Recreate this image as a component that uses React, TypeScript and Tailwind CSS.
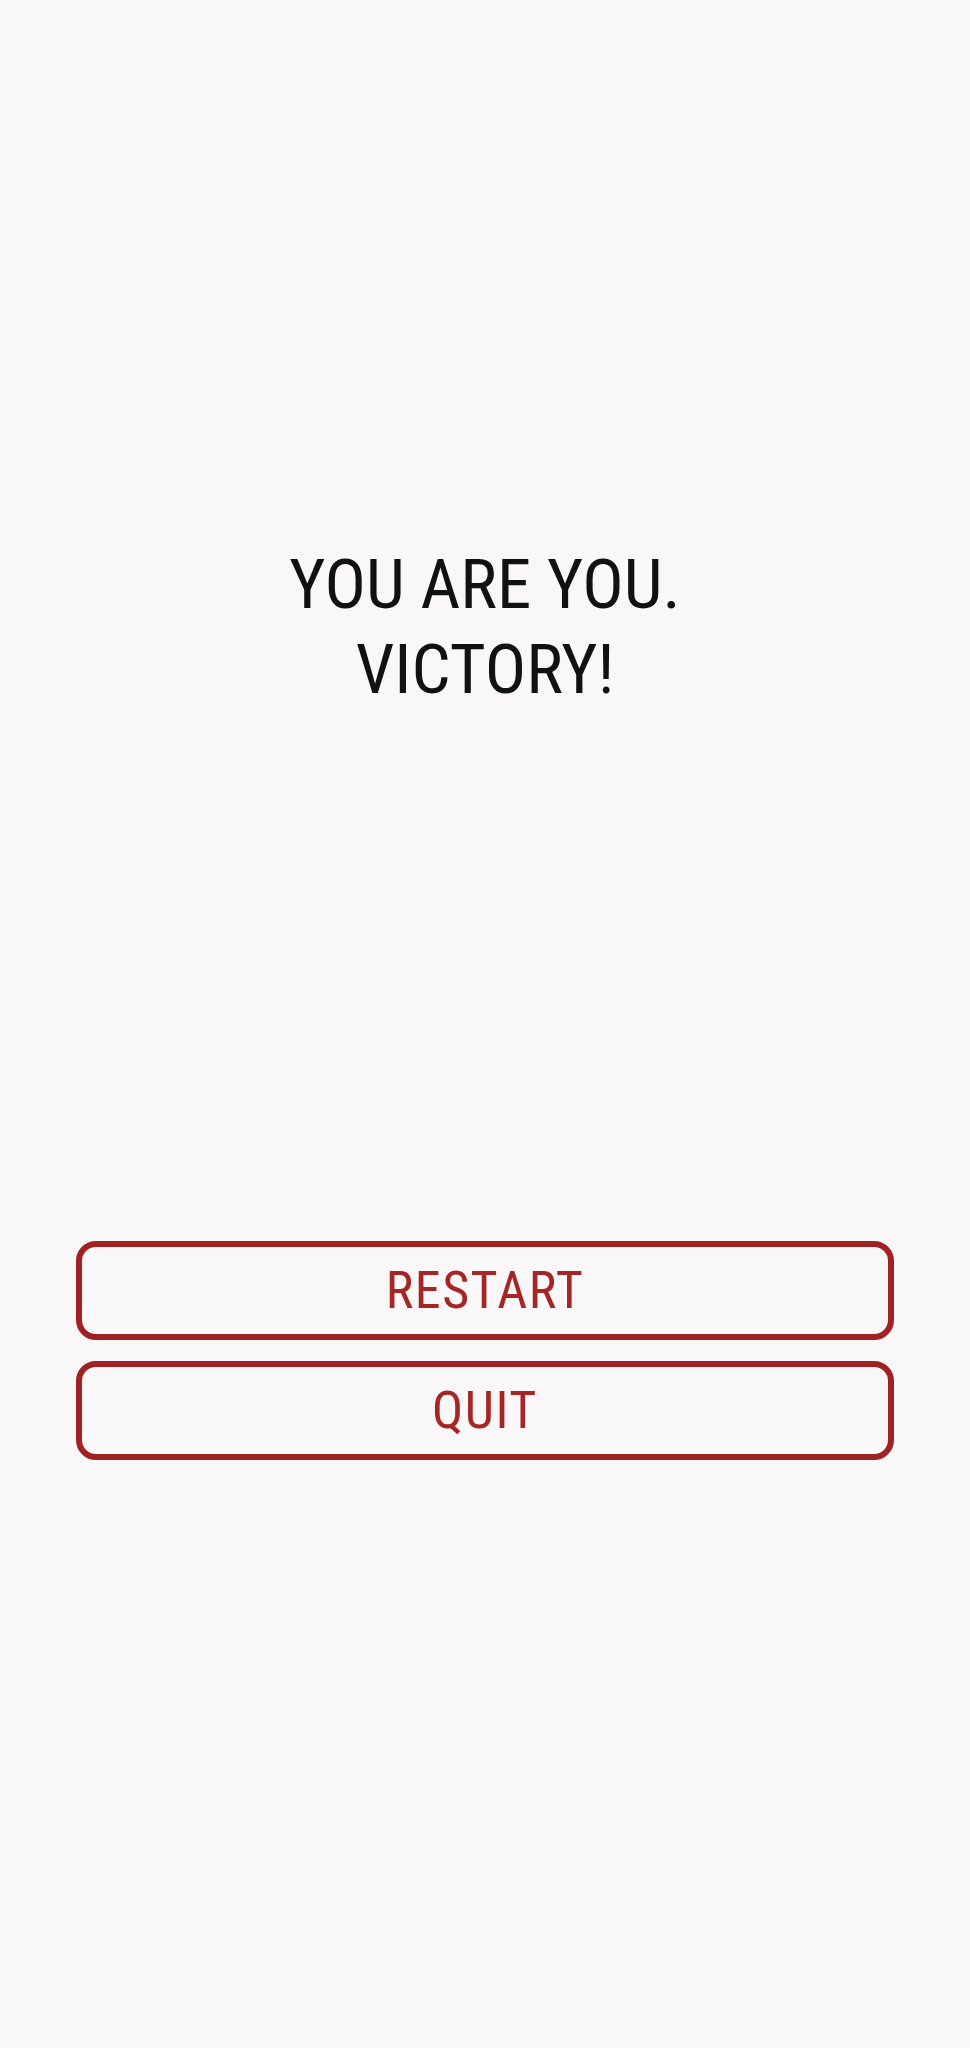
import * as React from 'react';

const font = { fontFamily: '"Roboto Condensed", Roboto, "Liberation Sans", sans-serif' };

function OutlineButton({ label }: { label: string }) {
  return (
    <button
      type="button"
      className="flex h-[99px] w-full items-center justify-center rounded-[20px] border-[6px] border-[#a02222] bg-transparent text-[52px] leading-none tracking-[1.5px] text-[#a62626]"
      style={font}
    >
      {label}
    </button>
  );
}

export default function App() {
  return (
    <div className="min-h-[2048px] w-full bg-[#f9f7f8]" style={font}>
      <div className="flex flex-col items-center pt-[542px]">
        <h1 className="text-center text-[69px] font-normal leading-[85px] text-[#111111]">
          YOU ARE YOU.
          <br />
          VICTORY!
        </h1>
      </div>
      <div className="mt-[529px] flex flex-col gap-[21px] px-[76px]">
        <OutlineButton label="RESTART" />
        <OutlineButton label="QUIT" />
      </div>
    </div>
  );
}
